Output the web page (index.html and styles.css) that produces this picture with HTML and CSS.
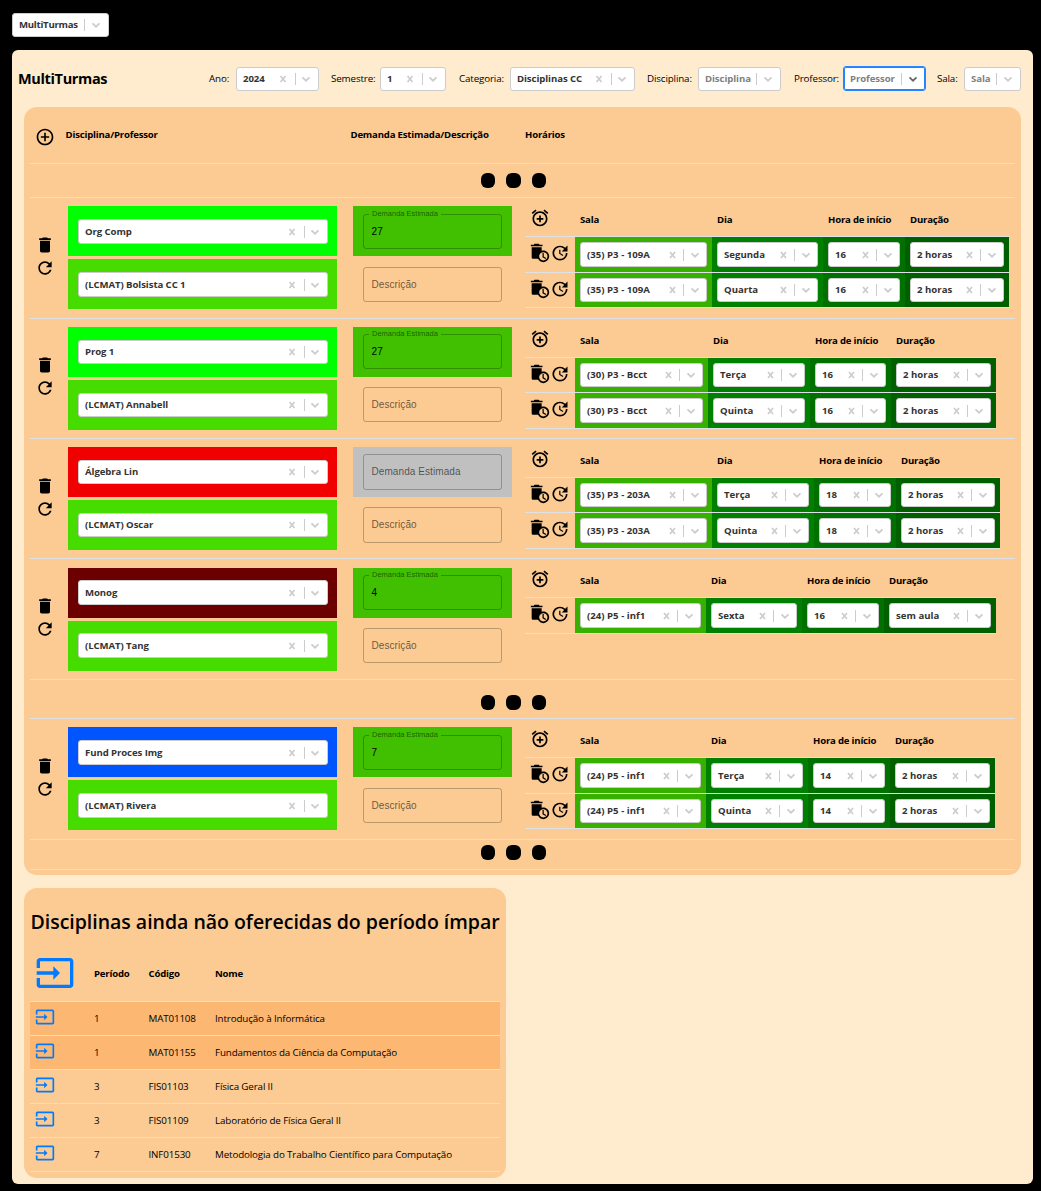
FILE: index.html
```html
<!DOCTYPE html>
<html lang="pt-BR">
<head>
<meta charset="utf-8">
<title>MultiTurmas</title>
<link rel="stylesheet" href="styles.css">
</head>
<body>
<svg class="sprite" aria-hidden="true">
  <symbol id="ind" viewBox="0 0 44 22"><path d="M6.500 8l5 6M11.500 8l-5 6" stroke="#ccc" stroke-width="1.700"/><path d="M21.500 5v12" stroke="#ccc"/><path d="M28.500 9.300l3.500 3.400 3.500-3.400" fill="none" stroke="#ccc" stroke-width="1.700"/></symbol>
  <symbol id="ind2" viewBox="0 0 44 22"><path d="M8 8l5 6M13 8l-5 6" stroke="#ccc" stroke-width="1.700"/><path d="M21.500 5v12" stroke="#ccc"/><path d="M29.500 9.300l3.500 3.400 3.500-3.400" fill="none" stroke="#ccc" stroke-width="1.700"/></symbol>
  <symbol id="down" viewBox="0 0 26 22"><path d="M2.500 5v12" stroke="#ccc"/><path d="M10.500 9.300l3.500 3.400 3.500-3.400" fill="none" stroke="currentColor" stroke-width="1.700"/></symbol>
  <symbol id="plus" viewBox="0 0 24 24"><path d="M13 7h-2v4H7v2h4v4h2v-4h4v-2h-4zm-1-5C6.480 2 2 6.480 2 12s4.480 10 10 10 10-4.480 10-10S17.520 2 12 2m0 18c-4.410 0-8-3.590-8-8s3.590-8 8-8 8 3.590 8 8-3.590 8-8 8"/></symbol>
  <symbol id="trash" viewBox="0 0 24 24"><path d="M6 19c0 1.100.9 2 2 2h8c1.100 0 2-.9 2-2V7H6zM19 4h-3.500l-1-1h-5l-1 1H5v2h14z"/></symbol>
  <symbol id="refresh" viewBox="0 0 24 24"><path d="M17.650 6.350C16.200 4.900 14.210 4 12 4c-4.420 0-7.990 3.580-7.990 8s3.570 8 7.990 8c3.730 0 6.840-2.550 7.730-6h-2.080c-.82 2.330-3.040 4-5.650 4-3.310 0-6-2.690-6-6s2.690-6 6-6c1.660 0 3.140.69 4.220 1.780L13 11h7V4z"/></symbol>
  <symbol id="alarm" viewBox="0 0 24 24"><path d="M7.880 3.390 6.600 1.860 2 5.710l1.290 1.530zM22 5.720l-4.600-3.860-1.290 1.530 4.600 3.860zM12 4c-4.970 0-9 4.030-9 9s4.020 9 9 9c4.970 0 9-4.030 9-9s-4.030-9-9-9m0 16c-3.870 0-7-3.130-7-7s3.130-7 7-7 7 3.130 7 7-3.130 7-7 7m1-11h-2v3H8v2h3v3h2v-3h3v-2h-3z"/></symbol>
  <symbol id="autodel" viewBox="0 0 24 24"><path d="M15 2h-3.500l-1-1h-5l-1 1H1v2h14zm1 7c-.7 0-1.370.1-2 .29V5H2v12c0 1.100.9 2 2 2h5.680c1.120 2.360 3.530 4 6.320 4 3.870 0 7-3.130 7-7s-3.130-7-7-7m0 12c-2.760 0-5-2.240-5-5s2.240-5 5-5 5 2.240 5 5-2.240 5-5 5"/><path d="M16.500 12H15v5l3.600 2.100.8-1.200-2.900-1.700z"/></symbol>
  <symbol id="update" viewBox="0 0 24 24"><path d="M21 10.120h-6.780l2.740-2.820c-2.730-2.700-7.150-2.800-9.880-.1-2.730 2.710-2.730 7.080 0 9.790s7.150 2.710 9.880 0C18.320 15.650 19 14.080 19 12.100h2c0 1.980-.88 4.550-2.640 6.290-3.510 3.480-9.210 3.480-12.720 0-3.500-3.470-3.530-9.110-.02-12.580s9.140-3.470 12.650 0L21 3zM12.500 8v4.250l3.500 2.080-.72 1.210L11 13V8z"/></symbol>
  <symbol id="input" viewBox="0 0 24 24"><path d="M21 3.010H3c-1.100 0-2 .9-2 2V9h2V4.990h18v14.030H3V15H1v4.010c0 1.100.9 1.980 2 1.980h18c1.100 0 2-.88 2-1.980v-14c0-1.110-.9-2-2-2M11 16l4-4-4-4v3H1v2h10z"/></symbol>
</svg>

<nav class="nav"><div class="select"><span>MultiTurmas</span><svg class="down"><use href="#down"/></svg></div></nav>

<main class="page">
  <header class="filters">
    <h1>MultiTurmas</h1>
    <span>Ano:</span><div class="select"><span>2024</span><svg class="ind"><use href="#ind"/></svg></div>
    <span>Semestre:</span><div class="select"><span>1</span><svg class="ind"><use href="#ind"/></svg></div>
    <span>Categoria:</span><div class="select"><span>Disciplinas CC</span><svg class="ind"><use href="#ind"/></svg></div>
    <span>Disciplina:</span><div class="select empty"><span>Disciplina</span><svg class="down"><use href="#down"/></svg></div>
    <span>Professor:</span><div class="select empty focus"><span>Professor</span><svg class="down"><use href="#down"/></svg></div>
    <span>Sala:</span><div class="select empty"><span>Sala</span><svg class="down"><use href="#down"/></svg></div>
  </header>

  <section class="board">
    <div class="row head">
      <svg class="icon"><use href="#plus"/></svg><b>Disciplina/Professor</b><b>Demanda Estimada/Descrição</b><b>Horários</b>
    </div>
    <div class="row dots first"><i></i><i></i><i></i></div>

    <div class="row class r1">
      <div class="tools"><svg class="icon"><use href="#trash"/></svg><svg class="icon"><use href="#refresh"/></svg></div>
      <div class="stack">
        <div class="block lime"><div class="select"><span>Org Comp</span><svg class="ind"><use href="#ind"/></svg></div></div>
        <div class="block prof"><div class="select"><span>(LCMAT) Bolsista CC 1</span><svg class="ind"><use href="#ind"/></svg></div></div>
      </div>
      <div class="stack">
        <div class="block demand"><fieldset><legend>Demanda Estimada</legend>27</fieldset></div>
        <div class="block"><fieldset class="blank">Descrição</fieldset></div>
      </div>
      <div class="slots">
        <div class="slot top"><svg class="icon"><use href="#alarm"/></svg><b>Sala</b><b>Dia</b><b>Hora de início</b><b>Duração</b></div>
        <div class="slot tall"><div class="acts"><svg class="icon"><use href="#autodel"/></svg><svg class="icon"><use href="#update"/></svg></div>
          <div class="sala"><div class="select"><span>(35) P3 - 109A</span><svg class="ind"><use href="#ind2"/></svg></div></div>
          <div class="dia"><div class="select"><span>Segunda</span><svg class="ind"><use href="#ind2"/></svg></div></div>
          <div class="hora"><div class="select"><span>16</span><svg class="ind"><use href="#ind2"/></svg></div></div>
          <div class="dur"><div class="select"><span>2 horas</span><svg class="ind"><use href="#ind2"/></svg></div></div></div>
        <div class="slot"><div class="acts"><svg class="icon"><use href="#autodel"/></svg><svg class="icon"><use href="#update"/></svg></div>
          <div class="sala"><div class="select"><span>(35) P3 - 109A</span><svg class="ind"><use href="#ind2"/></svg></div></div>
          <div class="dia"><div class="select"><span>Quarta</span><svg class="ind"><use href="#ind2"/></svg></div></div>
          <div class="hora"><div class="select"><span>16</span><svg class="ind"><use href="#ind2"/></svg></div></div>
          <div class="dur"><div class="select"><span>2 horas</span><svg class="ind"><use href="#ind2"/></svg></div></div></div>
      </div>
    </div>

    <div class="row class r2">
      <div class="tools"><svg class="icon"><use href="#trash"/></svg><svg class="icon"><use href="#refresh"/></svg></div>
      <div class="stack">
        <div class="block lime"><div class="select"><span>Prog 1</span><svg class="ind"><use href="#ind"/></svg></div></div>
        <div class="block prof"><div class="select"><span>(LCMAT) Annabell</span><svg class="ind"><use href="#ind"/></svg></div></div>
      </div>
      <div class="stack">
        <div class="block demand"><fieldset><legend>Demanda Estimada</legend>27</fieldset></div>
        <div class="block"><fieldset class="blank">Descrição</fieldset></div>
      </div>
      <div class="slots">
        <div class="slot top"><svg class="icon"><use href="#alarm"/></svg><b>Sala</b><b>Dia</b><b>Hora de início</b><b>Duração</b></div>
        <div class="slot"><div class="acts"><svg class="icon"><use href="#autodel"/></svg><svg class="icon"><use href="#update"/></svg></div>
          <div class="sala"><div class="select"><span>(30) P3 - Bcct</span><svg class="ind"><use href="#ind2"/></svg></div></div>
          <div class="dia"><div class="select"><span>Terça</span><svg class="ind"><use href="#ind2"/></svg></div></div>
          <div class="hora"><div class="select"><span>16</span><svg class="ind"><use href="#ind2"/></svg></div></div>
          <div class="dur"><div class="select"><span>2 horas</span><svg class="ind"><use href="#ind2"/></svg></div></div></div>
        <div class="slot tall"><div class="acts"><svg class="icon"><use href="#autodel"/></svg><svg class="icon"><use href="#update"/></svg></div>
          <div class="sala"><div class="select"><span>(30) P3 - Bcct</span><svg class="ind"><use href="#ind2"/></svg></div></div>
          <div class="dia"><div class="select"><span>Quinta</span><svg class="ind"><use href="#ind2"/></svg></div></div>
          <div class="hora"><div class="select"><span>16</span><svg class="ind"><use href="#ind2"/></svg></div></div>
          <div class="dur"><div class="select"><span>2 horas</span><svg class="ind"><use href="#ind2"/></svg></div></div></div>
      </div>
    </div>

    <div class="row class r3">
      <div class="tools"><svg class="icon"><use href="#trash"/></svg><svg class="icon"><use href="#refresh"/></svg></div>
      <div class="stack">
        <div class="block red"><div class="select"><span>Álgebra Lin</span><svg class="ind"><use href="#ind"/></svg></div></div>
        <div class="block prof"><div class="select"><span>(LCMAT) Oscar</span><svg class="ind"><use href="#ind"/></svg></div></div>
      </div>
      <div class="stack">
        <div class="block grey"><fieldset class="blank">Demanda Estimada</fieldset></div>
        <div class="block"><fieldset class="blank">Descrição</fieldset></div>
      </div>
      <div class="slots">
        <div class="slot top"><svg class="icon"><use href="#alarm"/></svg><b>Sala</b><b>Dia</b><b>Hora de início</b><b>Duração</b></div>
        <div class="slot"><div class="acts"><svg class="icon"><use href="#autodel"/></svg><svg class="icon"><use href="#update"/></svg></div>
          <div class="sala"><div class="select"><span>(35) P3 - 203A</span><svg class="ind"><use href="#ind2"/></svg></div></div>
          <div class="dia"><div class="select"><span>Terça</span><svg class="ind"><use href="#ind2"/></svg></div></div>
          <div class="hora"><div class="select"><span>18</span><svg class="ind"><use href="#ind2"/></svg></div></div>
          <div class="dur"><div class="select"><span>2 horas</span><svg class="ind"><use href="#ind2"/></svg></div></div></div>
        <div class="slot tall"><div class="acts"><svg class="icon"><use href="#autodel"/></svg><svg class="icon"><use href="#update"/></svg></div>
          <div class="sala"><div class="select"><span>(35) P3 - 203A</span><svg class="ind"><use href="#ind2"/></svg></div></div>
          <div class="dia"><div class="select"><span>Quinta</span><svg class="ind"><use href="#ind2"/></svg></div></div>
          <div class="hora"><div class="select"><span>18</span><svg class="ind"><use href="#ind2"/></svg></div></div>
          <div class="dur"><div class="select"><span>2 horas</span><svg class="ind"><use href="#ind2"/></svg></div></div></div>
      </div>
    </div>

    <div class="row class r4">
      <div class="tools"><svg class="icon"><use href="#trash"/></svg><svg class="icon"><use href="#refresh"/></svg></div>
      <div class="stack">
        <div class="block maroon"><div class="select"><span>Monog</span><svg class="ind"><use href="#ind"/></svg></div></div>
        <div class="block prof"><div class="select"><span>(LCMAT) Tang</span><svg class="ind"><use href="#ind"/></svg></div></div>
      </div>
      <div class="stack">
        <div class="block demand"><fieldset><legend>Demanda Estimada</legend>4</fieldset></div>
        <div class="block"><fieldset class="blank">Descrição</fieldset></div>
      </div>
      <div class="slots">
        <div class="slot top"><svg class="icon"><use href="#alarm"/></svg><b>Sala</b><b>Dia</b><b>Hora de início</b><b>Duração</b></div>
        <div class="slot tall"><div class="acts"><svg class="icon"><use href="#autodel"/></svg><svg class="icon"><use href="#update"/></svg></div>
          <div class="sala"><div class="select"><span>(24) P5 - inf1</span><svg class="ind"><use href="#ind2"/></svg></div></div>
          <div class="dia"><div class="select"><span>Sexta</span><svg class="ind"><use href="#ind2"/></svg></div></div>
          <div class="hora"><div class="select"><span>16</span><svg class="ind"><use href="#ind2"/></svg></div></div>
          <div class="dur"><div class="select"><span>sem aula</span><svg class="ind"><use href="#ind2"/></svg></div></div></div>
      </div>
    </div>

    <div class="row dots middle"><i></i><i></i><i></i></div>

    <div class="row class r5">
      <div class="tools"><svg class="icon"><use href="#trash"/></svg><svg class="icon"><use href="#refresh"/></svg></div>
      <div class="stack">
        <div class="block blue"><div class="select"><span>Fund Proces Img</span><svg class="ind"><use href="#ind"/></svg></div></div>
        <div class="block prof"><div class="select"><span>(LCMAT) Rivera</span><svg class="ind"><use href="#ind"/></svg></div></div>
      </div>
      <div class="stack">
        <div class="block demand"><fieldset><legend>Demanda Estimada</legend>7</fieldset></div>
        <div class="block"><fieldset class="blank">Descrição</fieldset></div>
      </div>
      <div class="slots">
        <div class="slot top"><svg class="icon"><use href="#alarm"/></svg><b>Sala</b><b>Dia</b><b>Hora de início</b><b>Duração</b></div>
        <div class="slot tall"><div class="acts"><svg class="icon"><use href="#autodel"/></svg><svg class="icon"><use href="#update"/></svg></div>
          <div class="sala"><div class="select"><span>(24) P5 - inf1</span><svg class="ind"><use href="#ind2"/></svg></div></div>
          <div class="dia"><div class="select"><span>Terça</span><svg class="ind"><use href="#ind2"/></svg></div></div>
          <div class="hora"><div class="select"><span>14</span><svg class="ind"><use href="#ind2"/></svg></div></div>
          <div class="dur"><div class="select"><span>2 horas</span><svg class="ind"><use href="#ind2"/></svg></div></div></div>
        <div class="slot"><div class="acts"><svg class="icon"><use href="#autodel"/></svg><svg class="icon"><use href="#update"/></svg></div>
          <div class="sala"><div class="select"><span>(24) P5 - inf1</span><svg class="ind"><use href="#ind2"/></svg></div></div>
          <div class="dia"><div class="select"><span>Quinta</span><svg class="ind"><use href="#ind2"/></svg></div></div>
          <div class="hora"><div class="select"><span>14</span><svg class="ind"><use href="#ind2"/></svg></div></div>
          <div class="dur"><div class="select"><span>2 horas</span><svg class="ind"><use href="#ind2"/></svg></div></div></div>
      </div>
    </div>

    <div class="row dots last"><i></i><i></i><i></i></div>
  </section>

  <section class="pending">
    <h2>Disciplinas ainda não oferecidas do período ímpar</h2>
    <div class="item title"><svg class="icon big"><use href="#input"/></svg><b>Período</b><b>Código</b><b>Nome</b></div>
    <div class="item hot"><svg class="icon"><use href="#input"/></svg><span>1</span><span>MAT01108</span><span>Introdução à Informática</span></div>
    <div class="item hot"><svg class="icon"><use href="#input"/></svg><span>1</span><span>MAT01155</span><span>Fundamentos da Ciência da Computação</span></div>
    <div class="item"><svg class="icon"><use href="#input"/></svg><span>3</span><span>FIS01103</span><span>Física Geral II</span></div>
    <div class="item"><svg class="icon"><use href="#input"/></svg><span>3</span><span>FIS01109</span><span>Laboratório de Física Geral II</span></div>
    <div class="item"><svg class="icon"><use href="#input"/></svg><span>7</span><span>INF01530</span><span>Metodologia do Trabalho Científico para Computação</span></div>
  </section>
</main>
</body>
</html>
```
FILE: styles.css
```css
* { box-sizing: border-box; }
body {
  margin: 0;
  padding: 13px 8px 0 12px;
  height: 1191px;
  background: #000;
  color: #000;
  font: 9.800px/14px "Open Sans", "Noto Sans", sans-serif;
  letter-spacing: -.14px;
  white-space: nowrap;
  overflow: hidden;
}
b { font-weight: 700; font-size: 9.600px; letter-spacing: -.2px; }
.sprite { display: none; }
.icon { display: block; width: 20px; height: 20px; flex: none; }

/* Select control */
.select {
  display: flex;
  align-items: center;
  justify-content: space-between;
  height: 24px;
  padding-left: 6px;
  background: #fff;
  border: 1px solid #ccc;
  border-radius: 3px;
  color: #333;
  font-size: 9.600px;
  font-weight: 700;
  letter-spacing: -.08px;
}
.ind { width: 44px; height: 22px; flex: none; }
.down { width: 26px; height: 22px; flex: none; color: #ccc; }
.empty { color: #808080; }
.focus { height: 25px; border-color: #2684ff; box-shadow: inset 0 0 0 1px #2684ff; }
.focus .down { color: #666; }

.nav { width: 97px; margin-bottom: 13px; }
.nav .select { letter-spacing: -.25px; }
.page {
  height: 1134px;
  background: #ffebcd;
  border-radius: 6px;
  padding: 16px 12px 0;
}

.filters {
  display: grid;
  grid-template-columns: 191px 27px 83px 12px 49px 66px 13px 51px 125px 12px 51px 83px 13px 49px 83px 11px 27px 57px;
  align-items: center;
  height: 24px;
  margin: 0 0 17px -6px;
}
.filters h1 { margin: 0; font-size: 14.500px; line-height: 20px; font-weight: 700; letter-spacing: -.35px; }
.filters > span:nth-of-type(2) { grid-column: 5; }
.filters > span:nth-of-type(3) { grid-column: 8; }
.filters > span:nth-of-type(4) { grid-column: 11; }
.filters > span:nth-of-type(5) { grid-column: 14; }
.filters > span:nth-of-type(6) { grid-column: 17; }

/* Offered classes */
.board {
  height: 768px;
  padding: 6px;
  background: #fbcb93;
  border-radius: 13px;
}
.row { border-bottom: 1px solid #dee2e6; }
.head {
  display: grid;
  grid-template-columns: 29.500px 285px 174.500px 1fr;
  align-items: center;
  height: 51px;
  padding: 0 0 6px 6px;
}
.head .icon { margin: 4px 0 0 -1px; }
.dots { display: flex; justify-content: center; gap: 11px; padding-right: 18px; }
.dots i { width: 14.500px; height: 15px; border-radius: 6px; background: #000; }
.first { height: 34px; padding-top: 9px; }
.middle { height: 39px; padding-top: 15px; }
.last { height: 30px; padding-top: 5px; }

.class {
  display: grid;
  grid-template-columns: 38px 285px 172px 1fr;
  height: 121px;
  --sel-top: 13px; --sel-h: 25px; --box-top: 8px; --box-h: 35px;
}
.tools { display: flex; flex-direction: column; gap: 3px; padding: 37px 0 0 5px; }
.stack { display: flex; flex-direction: column; gap: 3px; padding-top: 8px; }
.block { height: 50px; }
.stack:nth-child(2) .block { width: 269px; padding: var(--sel-top) 9px 0 10px; }
.stack:nth-child(3) .block { width: 159px; padding: var(--box-top) 10px 0; }
.block .select { height: var(--sel-h); }
.lime { background: #0f0; }
.prof { background: #46dc00; }
.red { background: #f00000; }
.maroon { background: #6c0000; }
.blue { background: #05f; }
.demand { background: #40c000; }
.grey { background: #c0c0c0; }

fieldset {
  height: var(--box-h);
  margin: 0;
  padding: 0 7.500px;
  border: 1px solid rgba(0, 0, 0, .25);
  border-radius: 3px;
  font: 10px/33px "Liberation Sans", Arial, sans-serif;
  letter-spacing: .08px;
}
legend {
  height: 1px;
  margin-left: -2.500px;
  padding: 0 3px;
  font-size: 7.500px;
  line-height: 0;
  letter-spacing: 0;
  color: rgba(0, 0, 0, .55);
}
.blank { color: rgba(0, 0, 0, .6); }

/* Schedule */
.slot { display: grid; grid-template-columns: 50px var(--cols); width: max-content; height: 35px; border-bottom: 1px solid #dee2e6; }
.slot.tall { height: 36px; }
.slot.top { height: 39px; }
.slot.top b { padding: 15px 0 0 5px; }
.slot.top .icon { margin: 10px 0 0 5px; }
.acts { display: flex; padding: 6px 0 0 5px; }
.slot .select { height: 100%; letter-spacing: .02px; }
.sala, .dia, .hora, .dur { padding: 5px; }
.sala { background: #38b000; }
.dia { background: #008000; }
.hora { background: #007000; }
.dur { background: #006000; }

.r1 { --cols: 137px 111px 82px 104px; }
.r2 { --cols: 133px 102px 81px 105px; height: 120px; --sel-h: 24px; --box-top: 7px; }
.r2 .tools { padding-top: 36px; }
.r3 { --cols: 137px 102px 82px 104px; height: 120px; --sel-h: 24px; --box-top: 7px; --box-h: 36px; }
.r4 { --cols: 131px 96px 82px 112px; --sel-top: 12px; --box-top: 7px; }
.r4 .stack { padding-top: 9px; }
.r5 { --cols: 131px 102px 82px 105px; }

/* Pending classes */
.pending {
  width: 482px;
  height: 290px;
  margin-top: 13px;
  padding: 0 6px;
  background: #fbcb93;
  border-radius: 13px;
}
.pending h2 { margin: 0; padding: 20px 0 0 .5px; font-size: 19.500px; line-height: 27px; font-weight: 600; height: 56px; letter-spacing: -.02px; }
.item {
  display: grid;
  grid-template-columns: 59px 54.500px 66.500px 1fr;
  align-items: center;
  height: 34px;
  padding-left: 5px;
  border-bottom: 1px solid #dee2e6;
}
.item .icon { fill: #007bff; margin-top: -4px; }
.item .big { width: 40px; height: 40px; margin-top: 0; }
.title { height: 58px; }
.title b { padding-top: 2px; }
.hot { background: #fcb873; }
```
